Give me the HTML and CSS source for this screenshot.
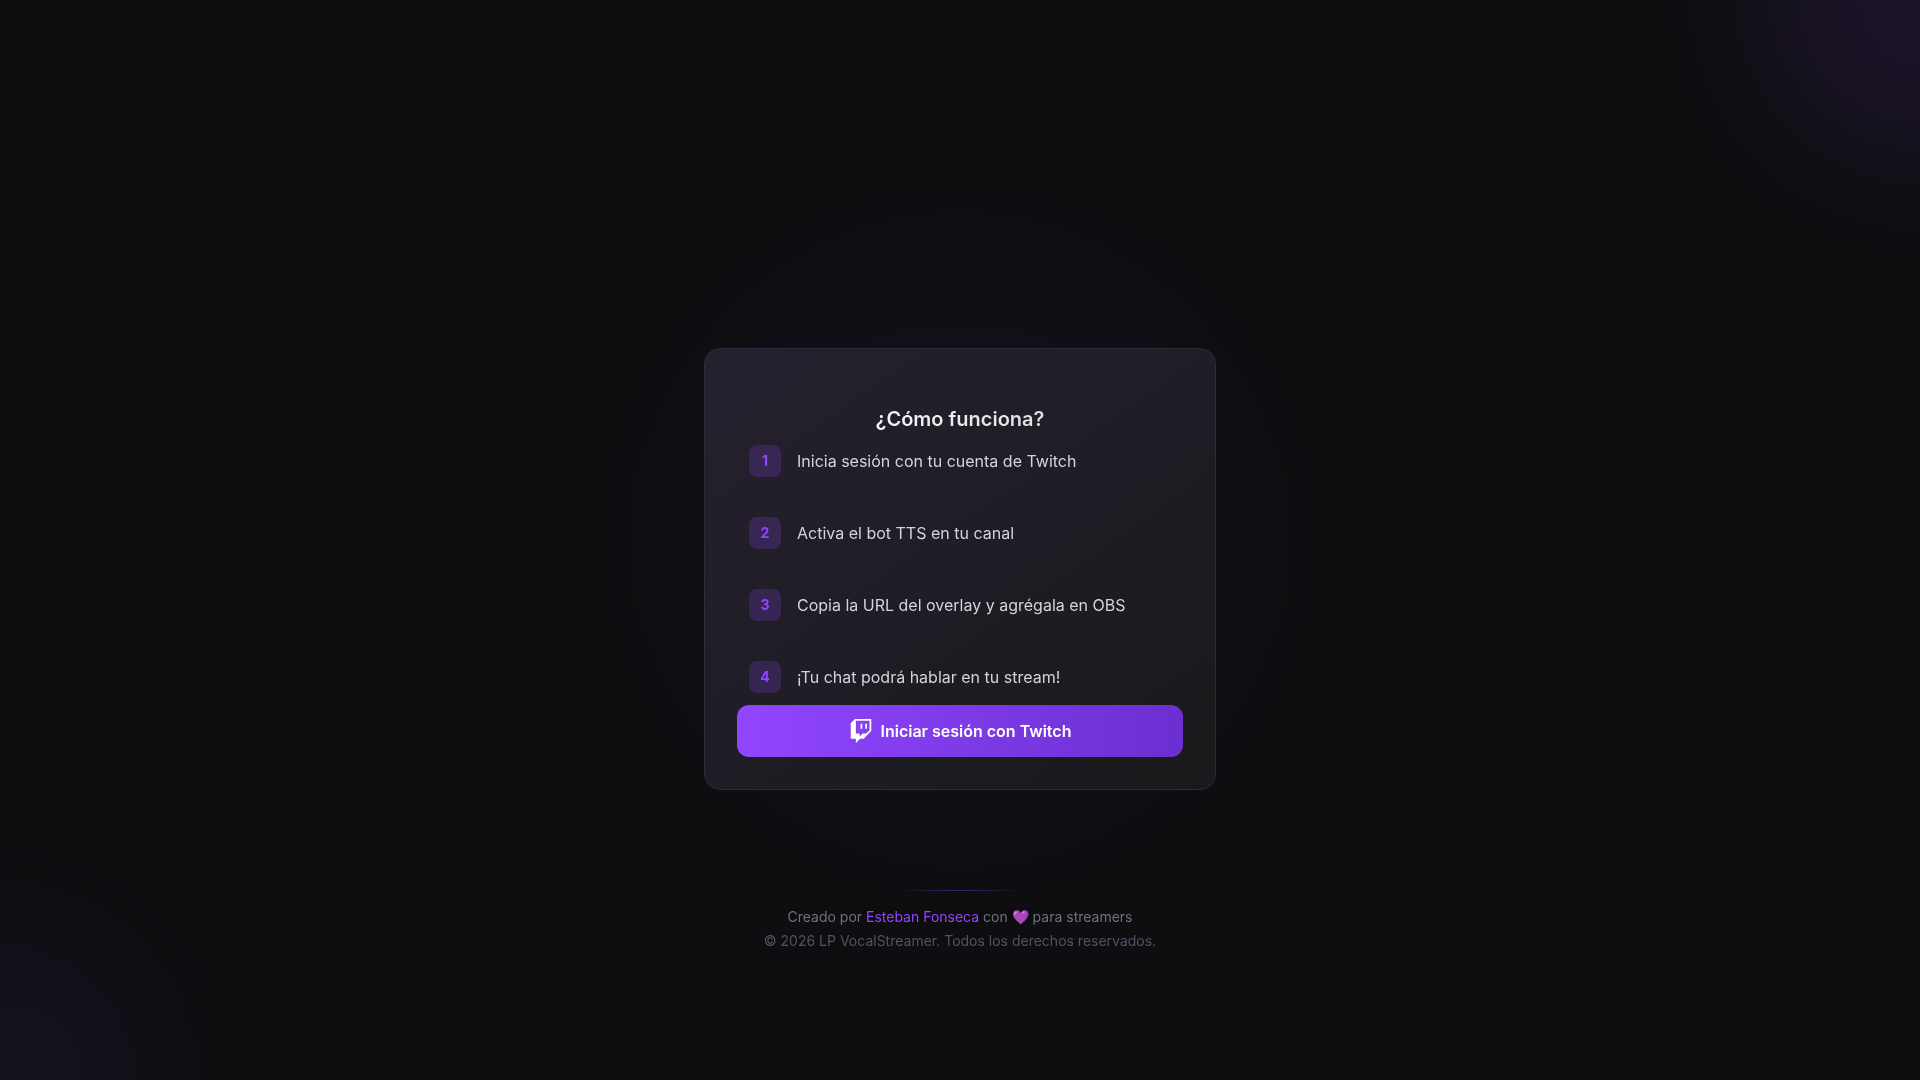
FILE: index.html
```html
<!DOCTYPE html>
<html lang="es">
<head>
  <meta charset="utf-8">
  <meta name="viewport" content="width=device-width, initial-scale=1">
  <title>LP VocalStreamer</title>
  <link rel="stylesheet" href="styles.css">
</head>
<body>
  <div class="glows" aria-hidden="true">
    <div class="glow glow-top"></div>
    <div class="glow glow-bottom"></div>
    <div class="glow glow-center"></div>
  </div>
  <div class="page">
    <main class="card">
      <h1 class="title"><span class="title-text">¿Cómo funciona?</span></h1>
      <ol class="steps">
        <li class="step"><span class="badge">1</span><span>Inicia sesión con tu cuenta de Twitch</span></li>
        <li class="step"><span class="badge">2</span><span>Activa el bot TTS en tu canal</span></li>
        <li class="step"><span class="badge">3</span><span>Copia la URL del overlay y agrégala en OBS</span></li>
        <li class="step"><span class="badge">4</span><span>¡Tu chat podrá hablar en tu stream!</span></li>
      </ol>
      <button class="login" type="button">
        <svg class="login-icon" viewBox="0 0 24 24" fill="currentColor" aria-hidden="true">
          <path d="M11.571 4.714h1.715v5.143H11.57zm4.715 0H18v5.143h-1.714zM6 0L1.714 4.286v15.428h5.143V24l4.286-4.286h3.428L22.286 12V0zm14.571 11.143l-3.428 3.428h-3.429l-3 3v-3H6.857V1.714h13.714Z"/>
        </svg>
        <span>Iniciar sesión con Twitch</span>
      </button>
    </main>
    <footer class="footer">
      <div class="divider"></div>
      <p class="credit">Creado por <a class="author" href="#">Esteban Fonseca</a> con 💜 para streamers</p>
      <p class="rights">© 2026 LP VocalStreamer. Todos los derechos reservados.</p>
    </footer>
  </div>
</body>
</html>
```
FILE: styles.css
```css
* {
  box-sizing: border-box;
  margin: 0;
  padding: 0;
}

body {
  background: #0e0e10;
  color: #fff;
  font-family: Inter, "Noto Sans", sans-serif;
  font-size: 16px;
  line-height: 24px;
}

.glows {
  position: fixed;
  inset: 0;
  overflow: hidden;
}

.glow {
  position: absolute;
  border-radius: 50%;
  filter: blur(64px);
}

.glow-top {
  top: -160px;
  right: -160px;
  width: 320px;
  height: 320px;
  background: rgba(145, 70, 255, 0.1);
}

.glow-bottom {
  bottom: -160px;
  left: -160px;
  width: 320px;
  height: 320px;
  background: rgba(145, 70, 255, 0.05);
}

.glow-center {
  top: 50%;
  left: 50%;
  width: 600px;
  height: 600px;
  margin: -300px 0 0 -300px;
  background: rgba(145, 70, 255, 0.03);
}

.page {
  position: relative;
  display: flex;
  flex-direction: column;
  align-items: center;
  justify-content: center;
  min-height: 100vh;
  padding: 234px 16px 16px;
}

.card {
  width: 100%;
  max-width: 512px;
  padding: 56px 32px 32px;
  border: 1px solid #2a2c37;
  border-radius: 16px;
  background: linear-gradient(145deg, #25202e 0%, #1f1d25 50%, #19191b 100%);
}

.title {
  font-size: 20px;
  font-weight: 600;
  line-height: 28px;
  text-align: center;
}

.title-text {
  background: linear-gradient(90deg, #f5f5f6, #dfe0e3);
  background-clip: text;
  color: transparent;
}

.steps {
  display: flex;
  flex-direction: column;
  gap: 16px;
  list-style: none;
}

.step {
  display: flex;
  align-items: center;
  gap: 16px;
  padding: 12px;
  color: #d1d5db;
}

.badge {
  display: flex;
  flex: none;
  align-items: center;
  justify-content: center;
  width: 32px;
  height: 32px;
  border-radius: 8px;
  background: rgba(145, 70, 255, 0.2);
  color: #9146ff;
  font-size: 14px;
  font-weight: 700;
  line-height: 20px;
}

.login {
  display: flex;
  align-items: center;
  justify-content: center;
  gap: 8px;
  width: 100%;
  padding: 14px 24px;
  border: 0;
  border-radius: 12px;
  background: linear-gradient(90deg, #9146ff, #6b2fd0);
  color: #fff;
  font: inherit;
  font-weight: 600;
  cursor: pointer;
}

.login-icon {
  width: 24px;
  height: 24px;
}

.footer {
  display: flex;
  flex-direction: column;
  align-items: center;
  margin-top: 100px;
  font-size: 14px;
  line-height: 20px;
  text-align: center;
}

.divider {
  width: 128px;
  height: 1px;
  margin-bottom: 16px;
  background: linear-gradient(90deg, transparent, rgba(145, 70, 255, 0.4), transparent);
}

.credit {
  margin-bottom: 4px;
  color: #6b7280;
}

.author {
  color: #9146ff;
  text-decoration: none;
}

.rights {
  color: #4b5563;
}
```
